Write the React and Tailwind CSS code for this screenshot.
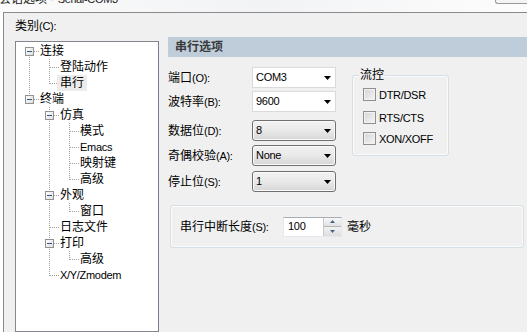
import React from "react";

const L = ({ children }) => (
  <span className="text-[11px] tracking-[-0.3px]">{children}</span>
);

const treeRows = [
  { cells: [{ k: "bottom", box: true }], text: "连接" },
  { cells: [{ k: "pipe" }, { k: "tee" }], text: "登陆动作" },
  { cells: [{ k: "pipe" }, { k: "elbow" }], text: "串行", selected: true },
  { cells: [{ k: "elbow", box: true }], text: "终端" },
  { cells: [{ k: "blank" }, { k: "tee", box: true }], text: "仿真" },
  { cells: [{ k: "blank" }, { k: "pipe" }, { k: "tee" }], text: "模式" },
  { cells: [{ k: "blank" }, { k: "pipe" }, { k: "tee" }], text: "Emacs", latin: true },
  { cells: [{ k: "blank" }, { k: "pipe" }, { k: "tee" }], text: "映射键" },
  { cells: [{ k: "blank" }, { k: "pipe" }, { k: "elbow" }], text: "高级" },
  { cells: [{ k: "blank" }, { k: "tee", box: true }], text: "外观" },
  { cells: [{ k: "blank" }, { k: "pipe" }, { k: "elbow" }], text: "窗口" },
  { cells: [{ k: "blank" }, { k: "tee" }], text: "日志文件" },
  { cells: [{ k: "blank" }, { k: "tee", box: true }], text: "打印" },
  { cells: [{ k: "blank" }, { k: "pipe" }, { k: "elbow" }], text: "高级" },
  { cells: [{ k: "blank" }, { k: "elbow" }], text: "X/Y/Zmodem", latin: true },
];

const dots = {
  stroke: "#a0a0a0",
  strokeDasharray: "1 1",
  shapeRendering: "crispEdges",
};

const TreeCell = ({ k, box }) => (
  <svg width="20" height="16" className="shrink-0">
    {(k === "pipe" || k === "tee") && (
      <line x1="10.5" y1="0" x2="10.5" y2="16" {...dots} />
    )}
    {k === "elbow" && <line x1="10.5" y1="0" x2="10.5" y2="9" {...dots} />}
    {k === "bottom" && <line x1="10.5" y1="8" x2="10.5" y2="16" {...dots} />}
    {k !== "pipe" && k !== "blank" && (
      <line x1="11" y1="8.5" x2="20" y2="8.5" {...dots} />
    )}
    {box && (
      <>
        <defs>
          <linearGradient id="bx" x1="0" y1="0" x2="1" y2="1">
            <stop offset="0" stopColor="#ffffff" />
            <stop offset="1" stopColor="#dcdcdc" />
          </linearGradient>
        </defs>
        <rect
          x="6.5"
          y="4.5"
          width="8"
          height="8"
          fill="url(#bx)"
          stroke="#919191"
          shapeRendering="crispEdges"
        />
        <line
          x1="8"
          y1="8.5"
          x2="13"
          y2="8.5"
          stroke="#3d5488"
          shapeRendering="crispEdges"
        />
      </>
    )}
  </svg>
);

const Arrow = () => (
  <svg width="7" height="4" className="shrink-0">
    <polygon points="0,0 7,0 3.5,4" fill="#000" />
  </svg>
);

const WhiteCombo = ({ value }) => (
  <div className="w-[84px] h-[21px] bg-white border border-[#dadada] flex items-center pl-[3px] pr-[4px] justify-between">
    <L>{value}</L>
    <Arrow />
  </div>
);

const GreyCombo = ({ value }) => (
  <div className="w-[84px] h-[21px] rounded-[3px] border border-[#707070] bg-gradient-to-b from-[#f2f2f2] via-[#e9e9e9] to-[#d6d6d6] shadow-[inset_0_0_0_1px_#fafafa] flex items-center pl-[3px] pr-[4px] justify-between">
    <L>{value}</L>
    <Arrow />
  </div>
);

const FormRow = ({ label, latin, children, className }) => (
  <div className={`flex items-center h-[21px] ${className}`}>
    <div className="w-[84px] whitespace-nowrap">
      <span>{label}</span>
      <L>{latin}</L>
    </div>
    {children}
  </div>
);

const Check = ({ label, className }) => (
  <div className={`flex items-center h-[13px] ${className}`}>
    <span className="w-[13px] h-[13px] border border-[#8f8f8f] bg-gradient-to-br from-[#d4d4d4] to-[#f6f6f6] shadow-[inset_0_0_0_1px_#f2f2f2]" />
    <span className="ml-[3px]">
      <L>{label}</L>
    </span>
  </div>
);

export default function App() {
  return (
    <div className="w-[527px] h-[332px] overflow-hidden bg-white flex flex-col text-[12px] text-black font-['Liberation_Sans','Noto_Sans_CJK_SC',sans-serif]">
      {/* title bar, mostly cut off */}
      <div className="h-[12px] shrink-0 relative overflow-hidden bg-gradient-to-r from-[#fbfbfb] via-[#f2f3f5] to-[#fdfdfd]">
        <div className="-mt-[9px] -ml-[1px] leading-[16px] whitespace-nowrap text-[#222]">
          会话选项 - <L>Serial-COM3</L>
        </div>
        <div className="absolute right-0 top-0 w-[32px] h-[4px] border-l border-b border-[#9a9a9a] rounded-bl-[3px] bg-[#f4f4f4]" />
      </div>

      <div className="flex-1 ml-[3px] border-l border-t border-[#8a8a8a] bg-[#f0f0f0] flex pl-[11px] pt-[6px] min-h-0">
        {/* categories */}
        <div className="w-[144px] shrink-0 flex flex-col">
          <div className="h-[22px] leading-[14px]">
            类别<L>(C):</L>
          </div>
          <div className="flex-1 bg-white border border-[#828790] border-r-[#7a7a8c] pt-[1px] pl-[3px]">
            {treeRows.map((row, i) => (
              <div key={i} className="flex items-center h-[16px]">
                {row.cells.map((c, j) => (
                  <TreeCell key={j} k={c.k} box={c.box} />
                ))}
                <span
                  className={`ml-[-2px] px-[3px] h-[16px] leading-[16px] whitespace-nowrap ${
                    row.selected ? "bg-[#ececec]" : ""
                  }`}
                >
                  {row.latin ? <L>{row.text}</L> : row.text}
                </span>
              </div>
            ))}
          </div>
        </div>

        {/* serial options */}
        <div className="flex-1 ml-[9px] mt-[18px] flex flex-col">
          <div className="h-[20px] bg-[#bfcddb] pl-[7px] flex items-center font-bold text-[#3a3a3a]">
            串行选项
          </div>

          <div className="flex">
            <div className="flex flex-col">
              <FormRow label="端口" latin="(O):" className="mt-[10px]">
                <WhiteCombo value="COM3" />
              </FormRow>
              <FormRow label="波特率" latin="(B):" className="mt-[3px]">
                <WhiteCombo value="9600" />
              </FormRow>
              <FormRow label="数据位" latin="(D):" className="mt-[8px]">
                <GreyCombo value="8" />
              </FormRow>
              <FormRow label="奇偶校验" latin="(A):" className="mt-[4px]">
                <GreyCombo value="None" />
              </FormRow>
              <FormRow label="停止位" latin="(S):" className="mt-[5px]">
                <GreyCombo value="1" />
              </FormRow>
            </div>

            <div className="relative ml-[16px] mt-[18px] w-[97px] h-[81px] rounded-[3px] border border-[#d5dfe5] shadow-[inset_0_0_0_1px_#fbfbfb] pt-[12px] pl-[10px]">
              <span className="absolute -top-[8px] left-[6px] px-[1px] leading-[14px] bg-[#f0f0f0]">
                流控
              </span>
              <Check label="DTR/DSR" />
              <Check label="RTS/CTS" className="mt-[10px]" />
              <Check label="XON/XOFF" className="mt-[8px]" />
            </div>
          </div>

          <div className="mt-[13px] ml-[2px] mr-[3px] h-[43px] rounded-[3px] border border-[#d5dfe5] shadow-[inset_0_0_0_1px_#fbfbfb] flex items-center pl-[9px]">
            <div className="w-[103px] whitespace-nowrap">
              串行中断长度<L>(S):</L>
            </div>
            <div className="w-[59px] h-[20px] bg-white border border-[#e3e9ef] border-t-[#abadb3] flex">
              <div className="flex-1 pl-[4px] flex items-center">
                <L>100</L>
              </div>
              <div className="w-[18px] flex flex-col border-l border-[#c8c8c8]">
                <div className="flex-1 flex items-center justify-center bg-gradient-to-b from-[#f7f7f7] to-[#e2e2e2] border-b border-[#b5b5b5]">
                  <svg width="5" height="3">
                    <polygon points="2.5,0 5,3 0,3" fill="#4d6185" />
                  </svg>
                </div>
                <div className="flex-1 flex items-center justify-center bg-gradient-to-b from-[#f2f2f2] to-[#dedede]">
                  <svg width="5" height="3">
                    <polygon points="0,0 5,0 2.5,3" fill="#4d6185" />
                  </svg>
                </div>
              </div>
            </div>
            <span className="ml-[5px]">毫秒</span>
          </div>
        </div>
      </div>
    </div>
  );
}
